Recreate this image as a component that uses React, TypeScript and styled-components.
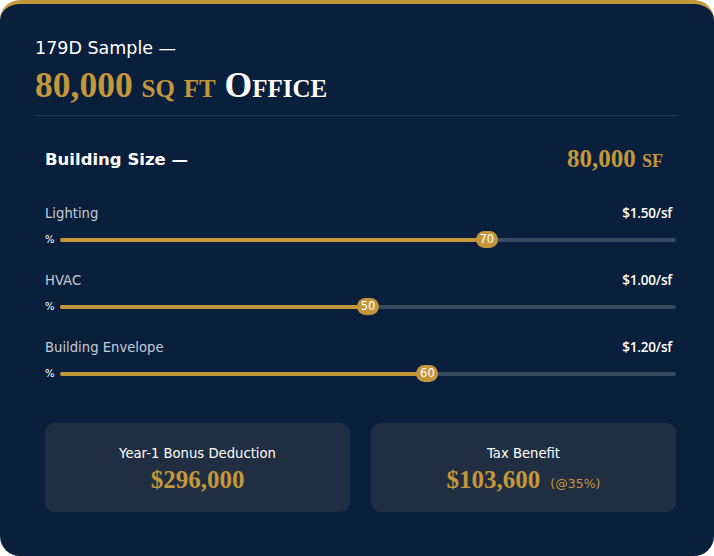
import React from 'react';
import styled, { createGlobalStyle } from 'styled-components';

const GOLD = '#c4973b';
const NAVY = '#0a1f3c';
const SANS = '"DejaVu Sans", "Open Sans", sans-serif';
const SERIF = '"Liberation Serif", "DejaVu Serif", serif';

const GlobalStyle = createGlobalStyle`
  html, body {
    margin: 0;
    padding: 0;
    background: #ffffff;
  }
`;

interface Rate {
  label: string;
  price: string;
  pct: number;
}

const rates: Rate[] = [
  { label: 'Lighting', price: '$1.50/sf', pct: 70 },
  { label: 'HVAC', price: '$1.00/sf', pct: 50 },
  { label: 'Building Envelope', price: '$1.20/sf', pct: 60 }
];

const THUMB_W = 22;

const Card = styled.div`
  box-sizing: border-box;
  width: 714px;
  height: 556px;
  background: ${NAVY};
  border-top: 4px solid ${GOLD};
  border-radius: 20px;
  padding: 32px 35px 0 35px;
  font-family: ${SANS};
  color: #ffffff;
`;

const Eyebrow = styled.div`
  font-size: 17.5px;
  line-height: 24px;
`;

const Title = styled.h1`
  margin: 6px 0 0;
  font-family: ${SERIF};
  font-weight: 700;
  font-size: 35.5px;
  line-height: 38px;
  font-variant: small-caps;
  color: ${GOLD};

  span {
    color: #ffffff;
  }
`;

const Divider = styled.hr`
  margin: 11px 0 0;
  border: 0;
  height: 1px;
  background: #223858;
`;

const Section = styled.div`
  padding: 28px 3px 0 10px;
`;

const SectionHeader = styled.div`
  display: flex;
  align-items: center;
  justify-content: space-between;
  height: 30px;
  padding-right: 13px;
`;

const SectionTitle = styled.div`
  font-size: 16.5px;
  font-weight: 600;
`;

const SectionValue = styled.div`
  font-family: ${SERIF};
  font-weight: 700;
  font-size: 25px;
  font-variant: small-caps;
  color: ${GOLD};
`;

const Rows = styled.div`
  display: flex;
  flex-direction: column;
  gap: 23px;
  margin-top: 30px;
`;

const Row = styled.div`
  display: flex;
  flex-direction: column;
  gap: 9px;
`;

const RowHead = styled.div`
  display: flex;
  justify-content: space-between;
  align-items: center;
  height: 18px;
  padding-right: 4px;
`;

const RowLabel = styled.div`
  font-size: 13.2px;
  color: #c5ccd8;
`;

const RowPrice = styled.div`
  font-family: "Open Sans", sans-serif;
  font-size: 13.5px;
  font-weight: 600;
  letter-spacing: -0.2px;
  color: #ffffff;
`;

const TrackRow = styled.div`
  display: flex;
  align-items: center;
  height: 17px;
`;

const Unit = styled.div`
  width: 15px;
  font-size: 10px;
  color: #ffffff;
`;

const Track = styled.div`
  position: relative;
  flex: 1;
  height: 4px;
  border-radius: 2px;
  background: #384a62;
`;

const Fill = styled.div`
  height: 100%;
  border-radius: 2px;
  background: ${GOLD};
`;

const Thumb = styled.div`
  position: absolute;
  top: 50%;
  width: ${THUMB_W}px;
  height: 17px;
  margin-top: -8.5px;
  border-radius: 9px;
  background: ${GOLD};
  color: #ffffff;
  font-size: 11.5px;
  line-height: 17px;
  text-align: center;
`;

const Boxes = styled.div`
  display: grid;
  grid-template-columns: 1fr 1fr;
  gap: 21px;
  margin-top: 41px;
`;

const Box = styled.div`
  box-sizing: border-box;
  display: flex;
  flex-direction: column;
  align-items: center;
  justify-content: center;
  height: 89px;
  padding-top: 4px;
  border-radius: 9px;
  background: #1f2e40;
  gap: 5px;
`;

const BoxLabel = styled.div`
  font-size: 13.2px;
  color: #ffffff;
`;

const BoxValue = styled.div`
  display: flex;
  align-items: baseline;
  gap: 10px;
  font-family: ${SERIF};
  font-weight: 700;
  font-size: 25px;
  color: ${GOLD};
`;

const BoxNote = styled.span`
  font-family: ${SANS};
  font-weight: 400;
  font-size: 12.5px;
`;

const Slider = ({ pct }: { pct: number }) => (
  <TrackRow>
    <Unit>%</Unit>
    <Track>
      <Fill style={{ width: `calc(${THUMB_W / 2}px + ${pct / 100} * (100% - ${THUMB_W}px))` }} />
      <Thumb style={{ left: `calc(${pct / 100} * (100% - ${THUMB_W}px))` }}>{pct}</Thumb>
    </Track>
  </TrackRow>
);

const App = () => (
  <>
    <GlobalStyle />
    <Card>
      <Eyebrow>179D Sample —</Eyebrow>
      <Title>
        80,000 sq ft <span>Office</span>
      </Title>
      <Divider />
      <Section>
        <SectionHeader>
          <SectionTitle>Building Size —</SectionTitle>
          <SectionValue>80,000 sf</SectionValue>
        </SectionHeader>
        <Rows>
          {rates.map((r) => (
            <Row key={r.label}>
              <RowHead>
                <RowLabel>{r.label}</RowLabel>
                <RowPrice>{r.price}</RowPrice>
              </RowHead>
              <Slider pct={r.pct} />
            </Row>
          ))}
        </Rows>
        <Boxes>
          <Box>
            <BoxLabel>Year-1 Bonus Deduction</BoxLabel>
            <BoxValue>$296,000</BoxValue>
          </Box>
          <Box>
            <BoxLabel>Tax Benefit</BoxLabel>
            <BoxValue>
              $103,600 <BoxNote>(@35%)</BoxNote>
            </BoxValue>
          </Box>
        </Boxes>
      </Section>
    </Card>
  </>
);

export default App;
